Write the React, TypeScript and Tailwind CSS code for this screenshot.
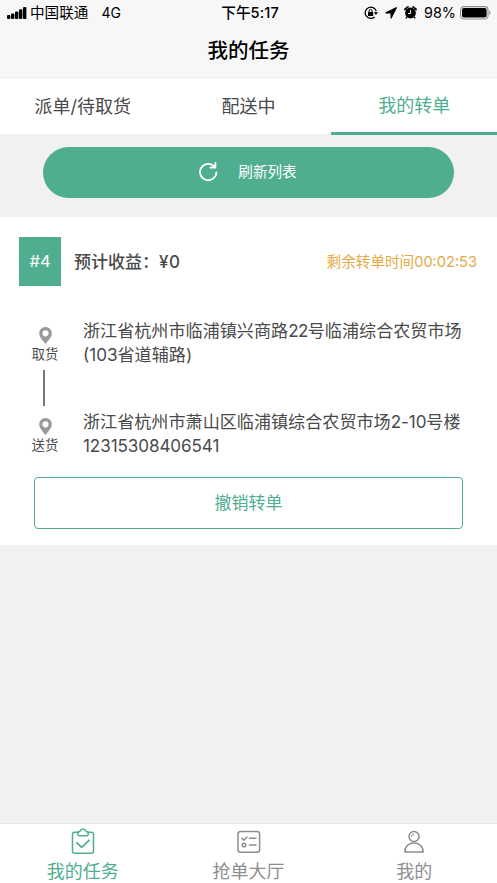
import type { ReactNode } from "react";

const TABS = ["派单/待取货", "配送中", "我的转单"];

function StatusBar() {
  return (
    <div className="flex h-[26px] items-center justify-between pl-[7px] pr-[6px] text-black">
      <div className="flex flex-1 items-center text-[14.6px]">
        <svg width="20" height="12" viewBox="0 0 20 12" className="mr-[3px]">
          <rect x="0" y="8" width="3.4" height="4" rx="1" />
          <rect x="4" y="6.4" width="3.4" height="5.6" rx="1" />
          <rect x="8" y="4.4" width="3.4" height="7.6" rx="1" />
          <rect x="12" y="2.2" width="3.4" height="9.8" rx="1" />
          <rect x="16" y="0" width="3.4" height="12" rx="1" />
        </svg>
        <span className="pt-0.5">中国联通</span>
        <span className="ml-[13px] text-[14px]">4G</span>
      </div>
      <div className="pl-0.5 pt-0.5 text-[14.6px] font-medium tracking-[0.1px]">下午5:17</div>
      <div className="flex flex-1 items-center justify-end">
        <svg width="14" height="14" viewBox="0 0 14 14" fill="none" stroke="#000" className="mr-[7px]">
          <path d="M12.2 5.2A5.6 5.6 0 1 0 10.6 11" strokeWidth="1.3" />
          <path d="M9.8 6.2h4.200l-2.100 2.900z" fill="#000" stroke="none" />
          <rect x="4" y="6.1" width="5.2" height="3.8" rx="0.5" fill="#000" stroke="none" />
          <path d="M5.1 6.2V5a1.5 1.5 0 0 1 3 0v1.2" />
        </svg>
        <svg width="12" height="12" viewBox="0 0 12 12" className="mr-[7px]">
          <path d="M11.3 0.7L0.9 5.9h5.200v5.200z" stroke="#000" strokeWidth="1.2" strokeLinejoin="round" />
        </svg>
        <svg width="13" height="13" viewBox="0 0 13 13" className="mr-[7px]">
          <circle cx="6.5" cy="7" r="5.4" />
          <path d="M1 3.4A9 9 0 0 1 3.9 1M12 3.4A9 9 0 0 0 9.1 1" stroke="#000" strokeWidth="1.9" strokeLinecap="round" fill="none" />
          <path d="M2.9 11L1.8 12.4M10.1 11L11.2 12.4" stroke="#000" strokeWidth="1.4" />
          <path d="M6.6 3.9V7.5H4.1" stroke="#f7f7f7" strokeWidth="1" fill="none" />
        </svg>
        <span className="mr-1 text-[14.4px]">98%</span>
        <svg width="31" height="14" viewBox="0 0 31 14">
          <rect x="0.6" y="0.6" width="27.4" height="12.4" rx="3.2" fill="none" stroke="#8c8c8c" strokeWidth="1.1" />
          <rect x="2" y="2" width="24.6" height="9.6" rx="1.8" />
          <path d="M29.2 4.6c1.6.6 1.6 3.8 0 4.4z" fill="#8c8c8c" />
        </svg>
      </div>
    </div>
  );
}

function Pin() {
  return (
    <svg width="13" height="17" viewBox="0 0 13 17" fill="#999">
      <path
        fillRule="evenodd"
        d="M6.5 0A6.3 6.3 0 0 0 .2 6.3C.2 10.5 4 13.5 6.5 17 9 13.5 12.8 10.5 12.8 6.3A6.3 6.3 0 0 0 6.5 0zM6.5 3.2a3.1 3.1 0 1 1 0 6.2 3.1 3.1 0 0 1 0-6.2z"
      />
    </svg>
  );
}

function Stop({ label, children }: { label: string; children: ReactNode }) {
  return (
    <div className="flex">
      <div className="flex w-[90px] flex-col items-center pt-2">
        <Pin />
        <span className="mt-px text-[13.2px] leading-[18px]">{label}</span>
      </div>
      <p className="-ml-[7px] whitespace-nowrap text-[17.1px] leading-6">{children}</p>
    </div>
  );
}

function NavItem({
  label,
  active = false,
  children,
}: {
  label: string;
  active?: boolean;
  children: ReactNode;
}) {
  return (
    <a className={`flex flex-1 flex-col items-center pt-1 ${active ? "text-[#50ae90]" : "text-[#8e8e8e]"}`}>
      <svg
        width="26"
        height="28"
        viewBox="0 0 26 28"
        fill="none"
        stroke="currentColor"
        strokeWidth="1.5"
        strokeLinecap="round"
        strokeLinejoin="round"
        className="shrink-0"
      >
        {children}
      </svg>
      <span className="mt-[3px] text-[18px] leading-[26px]">{label}</span>
    </a>
  );
}

export default function App() {
  return (
    <div className="flex h-[883px] w-[497px] flex-col overflow-hidden bg-[#f1f1f1] font-[Inter,'Noto_Sans_CJK_SC',sans-serif] text-[#4a4a4a]">
      <header className="h-[78px] border-b border-[#ededed] bg-[#f7f7f7]">
        <StatusBar />
        <h1 className="pt-2.5 text-center text-[20.5px] font-medium leading-[30px] text-black">我的任务</h1>
      </header>

      <nav className="flex h-14 bg-white text-[18px]">
        {TABS.map((tab, i) => (
          <button
            key={tab}
            className={`flex-1 border-b-[3px] ${
              i === 2 ? "-mb-px border-[#50ae90] pt-px text-[#50ae90]" : "border-transparent pt-[3px]"
            }`}
          >
            {tab}
          </button>
        ))}
      </nav>

      <div className="px-[43px] pb-[19px] pt-[13px]">
        <button className="flex h-[51px] w-full items-center justify-center rounded-full bg-[#50ae90] pr-0.5 text-[14.6px] text-white">
          <svg width="20" height="20" viewBox="0 0 20 20" fill="none" stroke="#fff" strokeWidth="1.8" strokeLinecap="round" strokeLinejoin="round" className="mb-0.5 mr-5">
            <path d="M18.4 10.5A8.2 8.2 0 1 1 16.4 4.6" />
            <path d="M17.4 0.9v4.7h-5" />
          </svg>
          <span className="pt-px">刷新列表</span>
        </button>
      </div>

      <section className="h-[328px] bg-white">
        <div className="flex items-center pl-[19px] pr-5 pt-5">
          <div className="flex h-[49px] w-[42px] items-center justify-center bg-[#50ae90] text-[16.5px] text-white">#4</div>
          <span className="ml-[13px] pt-0.5 text-[17px] font-medium">
            预计收益：<span className="tracking-[0.6px]">¥0</span>
          </span>
          <span className="ml-auto pt-0.5 text-[14.6px] text-[#e6a944]">剩余转单时间00:02:53</span>
        </div>

        <div className="pt-[33px]">
          <Stop label="取货">
            浙江省杭州市临浦镇兴商路<span className="tracking-[-0.6px]">22</span>号临浦综合农贸市场
            <br />
            (103省道辅路)
          </Stop>
          <div className="ml-[43px] mt-[3px] h-9 w-0.5 bg-[#777]" />
          <div className="mt-1">
            <Stop label="送货">
              浙江省杭州市萧山区临浦镇综合农贸市场<span className="tracking-[-0.1px]">2-10</span>号楼
              <br />
              <span className="tracking-[-0.1px]">12315308406541</span>
            </Stop>
          </div>
        </div>

        <button className="ml-[34px] mt-[19px] h-[52px] w-[429px] rounded-[4px] border border-[#50ae90] pt-0.5 text-[17px] text-[#50ae90]">
          撤销转单
        </button>
      </section>

      <footer className="mt-auto flex h-[60px] border-t border-[#e6e6e6] bg-white">
        <NavItem label="我的任务" active>
          <path d="M8 4.2H4.5A2 2 0 0 0 2.5 6.2v17A2 2 0 0 0 4.5 25.2h17a2 2 0 0 0 2-2v-17a2 2 0 0 0-2-2H18" />
          <path d="M9.5 7.8h7c2.5 0 2.5-4.4-.3-4.4C15 .3 11 .3 9.8 3.4c-2.8 0-2.8 4.4-.3 4.4z" />
          <path d="M7 14.8l4.6 4.5 7.4-7" strokeWidth="1.8" />
        </NavItem>
        <NavItem label="抢单大厅">
          <rect x="2" y="3.4" width="21.6" height="20.8" rx="2.5" />
          <path d="M6 10.400l1.700 1.700L11 9M13.500 10.300h6.500M13.500 17h6.500" />
          <circle cx="8" cy="17" r="1.8" />
        </NavItem>
        <NavItem label="我的">
          <circle cx="13" cy="8.5" r="5" />
          <path d="M3.800 24c0-12 18.400-12 18.400 0z" />
          <path d="M10.3 8.6a2.7 2.7 0 0 1 2.3-2.5" strokeWidth="1" />
        </NavItem>
      </footer>
    </div>
  );
}
